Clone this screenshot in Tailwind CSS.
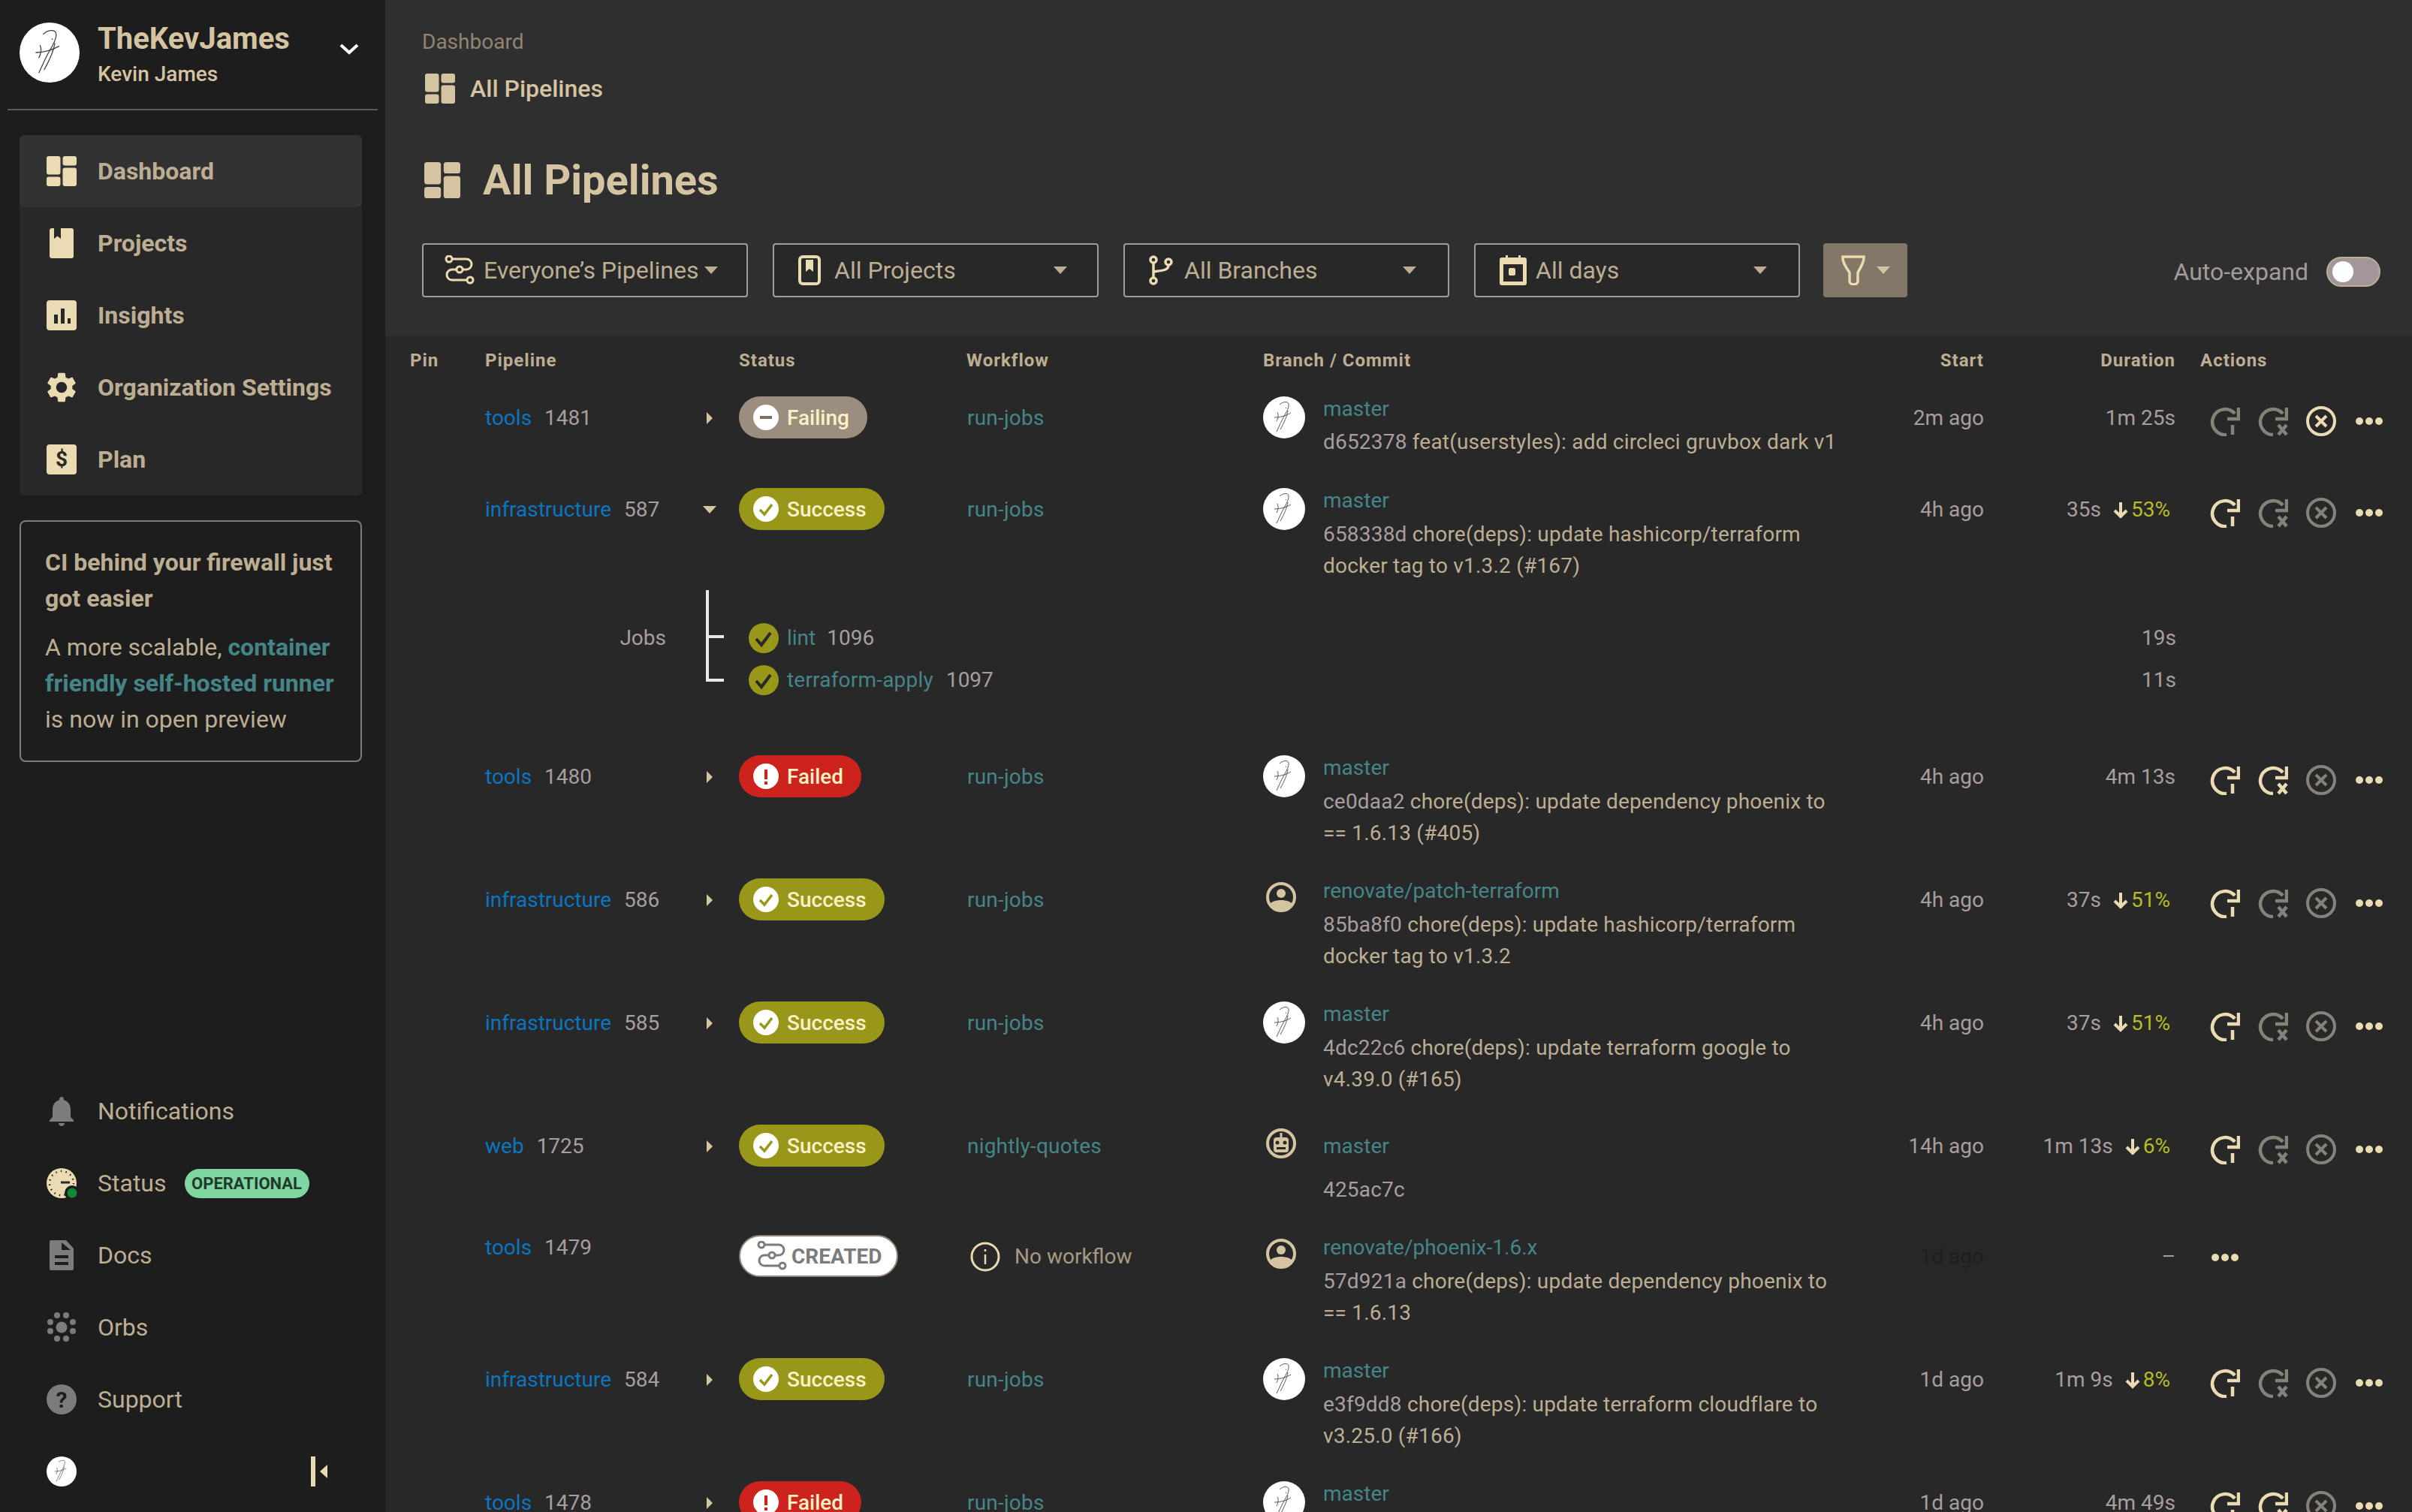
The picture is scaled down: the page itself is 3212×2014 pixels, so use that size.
<!DOCTYPE html>
<html lang="en">

<head>
    <meta charset="UTF-8">
    <title>All Pipelines</title>
    <script src="https://cdn.jsdelivr.net/npm/@tailwindcss/browser@4"></script>
</head>

<body class="h-screen overflow-hidden bg-[#2f2f2f] font-['Roboto',sans-serif] text-[28px] text-[#bdae93]">
    <!-- shared icons -->
    <svg class="hidden">
        <symbol id="i-dash" viewBox="0 0 40 40"><g fill="currentColor"><rect x="0" y="0" width="18.5" height="24.5" rx="3"/><rect x="21.5" y="0" width="18.5" height="12.5" rx="3"/><rect x="0" y="27.5" width="18.5" height="12.5" rx="3"/><rect x="21.5" y="15.5" width="18.5" height="24.5" rx="3"/></g></symbol>
        <symbol id="i-logo" viewBox="0 0 56 56"><circle cx="28" cy="28" r="28" fill="#fff"/><g fill="none" stroke="#444" stroke-width="0.9"><path d="M22 11c4-4 11-5 12-1 1 6-5 14-9 22-3 6-5 11-7 15"/><path d="M33 19c-1 7-5 16-10 25"/><path d="M19 21c2 4 1 8-1 12"/><path d="M15 28c7 0 15-2 22-6"/><path d="M30 15l1 1"/></g></symbol>
        <symbol id="i-pipe" viewBox="0 0 40 40"><g fill="none" stroke="currentColor" stroke-width="3"><circle cx="6" cy="5" r="4"/><path d="M10 5h19a7 7 0 0 1 0 14h-5"/><circle cx="20" cy="19" r="4"/><path d="M16 19h-6a7 7 0 0 0 0 14h20"/><circle cx="34" cy="33" r="4"/></g></symbol>
        <symbol id="i-rerun" viewBox="0 0 40 40"><g fill="none" stroke="currentColor" stroke-width="4.5"><path d="M33 10A17 17 0 1 0 22 38"/><path d="M38 2v15H23"/><path d="M30 25v13"/></g></symbol>
        <symbol id="i-refail" viewBox="0 0 40 40"><g fill="none" stroke="currentColor" stroke-width="4.5"><path d="M33 10A17 17 0 1 0 20 38"/><path d="M38 2v15H23"/><path d="M27 25l11 13M38 25L27 38"/></g></symbol>
        <symbol id="i-cancel" viewBox="0 0 40 40"><g fill="none" stroke="currentColor" stroke-width="4"><circle cx="20" cy="20" r="18"/><path d="M13 13l14 14M27 13L13 27"/></g></symbol>
        <symbol id="i-dots" viewBox="0 0 40 40"><g fill="currentColor"><circle cx="7" cy="20" r="5"/><circle cx="20" cy="20" r="5"/><circle cx="33" cy="20" r="5"/></g></symbol>
        <symbol id="i-user" viewBox="0 0 40 40"><circle cx="20" cy="20" r="18" fill="none" stroke="currentColor" stroke-width="4"/><circle cx="20" cy="15" r="6" fill="currentColor"/><path d="M4 30c3-4 9-6 16-6s13 2 16 6c-3 6-9 9-16 9s-13-3-16-9z" fill="currentColor"/></symbol>
        <symbol id="i-robot" viewBox="0 0 40 40"><circle cx="20" cy="20" r="18" fill="none" stroke="currentColor" stroke-width="4"/><rect x="10" y="12" width="20" height="20" rx="4" fill="currentColor"/><rect x="18.5" y="6" width="3" height="7" fill="currentColor"/><circle cx="15" cy="19" r="2.5" fill="#282828"/><circle cx="25" cy="19" r="2.5" fill="#282828"/><rect x="14" y="25" width="12" height="3" fill="#282828"/></symbol>
    </svg>

    <div class="flex h-full">
        <!-- sidebar -->
        <aside class="flex h-full w-[513px] shrink-0 flex-col bg-[#1d1d1d]">
            <div class="mx-[10px] flex h-[147px] items-start border-b-2 border-[#5a5a5a] pl-4 pt-[30px]">
                <svg class="h-[80px] w-[80px] shrink-0"><use href="#i-logo"/></svg>
                <div class="ml-6 w-[270px]">
                    <div class="text-[40px] leading-[44px] font-bold text-[#d5c4a1]">TheKevJames</div>
                    <div class="mt-[7px] text-[28px] leading-[36px] font-medium text-[#d5c4a1]">Kevin James</div>
                </div>
                <svg class="mt-[27px] ml-[52px] h-[16px] w-[26px] text-white" viewBox="0 0 26 16"><path d="M2 3l11 10L24 3" fill="none" stroke="currentColor" stroke-width="4"/></svg>
            </div>

            <nav class="mx-[26px] mt-[33px] w-[456px] rounded-md bg-[#282828] text-[32px] font-bold text-[#bdae93]">
                <a class="flex h-[96px] items-center rounded-md bg-[#323232] pl-9">
                    <svg class="h-10 w-10 text-[#ebdbb2]"><use href="#i-dash"/></svg>
                    <span class="ml-7">Dashboard</span>
                </a>
                <a class="flex h-[96px] items-center pl-9">
                    <svg class="h-10 w-10" viewBox="0 0 40 40"><rect x="4" width="32" height="40" rx="3" fill="#ebdbb2"/><path d="M10 0h9v14l-4.5-3.5L10 14z" fill="#282828"/></svg>
                    <span class="ml-7">Projects</span>
                </a>
                <a class="flex h-[96px] items-center pl-9">
                    <svg class="h-10 w-10" viewBox="0 0 40 40"><rect width="40" height="40" rx="4" fill="#ebdbb2"/><g fill="#282828"><rect x="10" y="19" width="5" height="12"/><rect x="19" y="11" width="5" height="20"/><rect x="28" y="24" width="4" height="7"/></g></svg>
                    <span class="ml-7">Insights</span>
                </a>
                <a class="flex h-[96px] items-center pl-9">
                    <svg class="h-10 w-10" viewBox="2 2 20 20"><path fill="#ebdbb2" d="M19.14 12.94c.04-.3.06-.61.06-.94 0-.32-.02-.64-.07-.94l2.03-1.58c.18-.14.23-.41.12-.61l-1.92-3.32c-.12-.22-.37-.29-.59-.22l-2.39.96c-.5-.38-1.03-.7-1.62-.94l-.36-2.54c-.04-.24-.24-.41-.48-.41h-3.84c-.24 0-.43.17-.47.41l-.36 2.54c-.59.24-1.13.57-1.62.94l-2.39-.96c-.22-.08-.47 0-.59.22L2.74 8.87c-.12.21-.08.47.12.61l2.03 1.58c-.05.3-.09.63-.09.94s.02.64.07.94l-2.03 1.58c-.18.14-.23.41-.12.61l1.92 3.32c.12.22.37.29.59.22l2.39-.96c.5.38 1.03.7 1.62.94l.36 2.54c.05.24.24.41.48.41h3.84c.24 0 .44-.17.47-.41l.36-2.54c.59-.24 1.13-.56 1.62-.94l2.39.96c.22.08.47 0 .59-.22l1.92-3.32c.12-.22.07-.47-.12-.61l-2.01-1.58zM12 15.6c-1.98 0-3.6-1.62-3.6-3.6s1.62-3.6 3.6-3.6 3.6 1.62 3.6 3.6-1.62 3.6-3.6 3.6z"/></svg>
                    <span class="ml-7">Organization Settings</span>
                </a>
                <a class="flex h-[96px] items-center pl-9">
                    <div class="flex h-10 w-10 items-center justify-center rounded bg-[#ebdbb2] text-[28px] font-bold text-[#282828]">$</div>
                    <span class="ml-7">Plan</span>
                </a>
            </nav>

            <div class="mx-[26px] mt-[33px] h-[322px] w-[456px] rounded-lg border-2 border-[#7c7c7c] pt-[30px] pl-[32px] text-[32px] leading-[48px] text-[#bdae93]">
                <div class="font-bold">CI behind your firewall just got easier</div>
                <div class="mt-[17px] w-[400px]">A more scalable, <span class="font-bold text-[#458588]">container friendly self-hosted runner</span> is now in open preview</div>
            </div>

            <div class="mt-auto pb-[6px] text-[32px] text-[#bdae93]">
                <a class="flex h-[96px] items-center pl-[62px]">
                    <svg class="h-10 w-10" viewBox="3.5 2 17 20" preserveAspectRatio="xMidYMid meet"><path fill="#7c7c7c" d="M12 22c1.1 0 2-.9 2-2h-4c0 1.1.89 2 2 2zm6-6v-5c0-3.07-1.64-5.64-4.5-6.32V4c0-.83-.67-1.5-1.5-1.5s-1.5.67-1.5 1.5v.68C7.63 5.36 6 7.92 6 11v5l-2 2v1h16v-1l-2-2z"/></svg>
                    <span class="ml-7">Notifications</span>
                </a>
                <a class="flex h-[96px] items-center pl-[62px]">
                    <svg class="h-10 w-10 overflow-visible" viewBox="0 0 40 40">
                        <circle cx="20" cy="20" r="20" fill="#ebdbb2"/>
                        <circle cx="20" cy="20" r="16" fill="none" stroke="#282828" stroke-width="2.5" stroke-dasharray="1.5 5.2"/>
                        <path d="M19 19h12" stroke="#282828" stroke-width="3"/>
                        <circle cx="34" cy="33" r="10" fill="#1d1d1d"/><circle cx="34" cy="33" r="6.5" fill="#0f8a33"/>
                    </svg>
                    <span class="ml-7">Status</span>
                    <span class="ml-6 flex h-[39px] w-[166px] items-center justify-center rounded-full bg-[#7fd6a0] text-[22px] font-bold text-[#1f3b2a]">OPERATIONAL</span>
                </a>
                <a class="flex h-[96px] items-center pl-[62px]">
                    <svg class="h-10 w-10" viewBox="0 0 40 40"><path fill="#7c7c7c" d="M6 0h20l10 11v27a2 2 0 0 1-2 2H6a2 2 0 0 1-2-2V2a2 2 0 0 1 2-2z"/><path d="M20 3l12 10H20z" fill="#1d1d1d"/><rect x="11" y="20" width="18" height="4" fill="#1d1d1d"/><rect x="11" y="29" width="18" height="4" fill="#1d1d1d"/></svg>
                    <span class="ml-7">Docs</span>
                </a>
                <a class="flex h-[96px] items-center pl-[62px]">
                    <svg class="h-10 w-10" viewBox="0 0 40 40"><g fill="#7c7c7c"><circle cx="20" cy="20" r="7.5"/><circle cx="14" cy="4" r="4"/><circle cx="26" cy="4" r="4"/><circle cx="5" cy="13" r="4"/><circle cx="35" cy="13" r="4"/><circle cx="5" cy="25" r="4"/><circle cx="35" cy="25" r="4"/><circle cx="14" cy="35" r="4"/><circle cx="26" cy="35" r="4"/></g></svg>
                    <span class="ml-7">Orbs</span>
                </a>
                <a class="flex h-[96px] items-center pl-[62px]">
                    <div class="flex h-10 w-10 items-center justify-center rounded-full bg-[#7c7c7c] text-[30px] font-bold text-[#1d1d1d]">?</div>
                    <span class="ml-7">Support</span>
                </a>
                <div class="flex h-[96px] items-center pl-[62px]">
                    <svg class="h-10 w-10"><use href="#i-logo"/></svg>
                    <svg class="ml-[312px] h-10 w-[24px] text-[#ebdbb2]" viewBox="0 0 24 40"><rect width="6" height="40" fill="currentColor"/><path d="M22 11v18L12 20z" fill="currentColor"/></svg>
                </div>
            </div>
        </aside>

        <!-- main -->
        <main class="min-w-0 flex-1">
            <header class="h-[447px] pt-[38px] pl-[49px]">
                <div class="text-[28px] leading-9 text-[#928374]">Dashboard</div>
                <div class="mt-[24px] flex h-10 items-center pl-[4px] text-[32px] font-medium text-[#d5c4a1]">
                    <svg class="h-10 w-10 text-[#d5c4a1]"><use href="#i-dash"/></svg>
                    <span class="ml-[20px]">All Pipelines</span>
                </div>
                <div class="mt-[78px] flex h-12 items-center pl-[3px]">
                    <svg class="h-12 w-12 text-[#d5c4a1]"><use href="#i-dash"/></svg>
                    <h1 class="ml-[30px] text-[56px] font-bold text-[#d5c4a1]">All Pipelines</h1>
                </div>
                <div class="mt-[60px] flex items-center">
                    <button class="flex h-[72px] w-[434px] items-center rounded-sm border-2 border-[#a39c94] bg-[#282828] pl-[28px] text-[32px] text-[#bdae93]">
                        <svg class="h-10 w-10 text-[#ebdbb2]"><use href="#i-pipe"/></svg>
                        <span class="ml-[12px]">Everyone’s Pipelines</span>
                        <span class="ml-2 h-0 w-0 border-x-[9px] border-t-[10px] border-x-transparent border-t-[#bdae93]"></span>
                    </button>
                    <button class="ml-[33px] flex h-[72px] w-[434px] items-center rounded-sm border-2 border-[#a39c94] bg-[#282828] pl-[32px] text-[32px] text-[#bdae93]">
                        <svg class="h-10 w-[30px] text-[#ebdbb2]" viewBox="0 0 30 40"><rect x="2" y="2" width="26" height="36" rx="4" fill="none" stroke="currentColor" stroke-width="4"/><path d="M10 6h10v16l-5-4-5 4z" fill="currentColor"/></svg>
                        <span class="ml-[18px]">All Projects</span>
                        <span class="mr-[40px] ml-auto h-0 w-0 border-x-[9px] border-t-[10px] border-x-transparent border-t-[#bdae93]"></span>
                    </button>
                    <button class="ml-[33px] flex h-[72px] w-[434px] items-center rounded-sm border-2 border-[#a39c94] bg-[#282828] pl-[32px] text-[32px] text-[#bdae93]">
                        <svg class="h-10 w-[32px] text-[#ebdbb2]" viewBox="0 0 32 40"><g fill="none" stroke="currentColor" stroke-width="3.5"><circle cx="6" cy="6" r="4"/><circle cx="26" cy="9" r="4"/><circle cx="6" cy="34" r="4"/><path d="M6 10v20M26 13c0 6-4 7-20 9"/></g></svg>
                        <span class="ml-[15px]">All Branches</span>
                        <span class="mr-[42px] ml-auto h-0 w-0 border-x-[9px] border-t-[10px] border-x-transparent border-t-[#bdae93]"></span>
                    </button>
                    <button class="ml-[33px] flex h-[72px] w-[434px] items-center rounded-sm border-2 border-[#a39c94] bg-[#282828] pl-[32px] text-[32px] text-[#bdae93]">
                        <svg class="h-10 w-9 text-[#ebdbb2]" viewBox="0 0 36 40"><path d="M3 3h5V0h3v3h14V0h3v3h5a3 3 0 0 1 3 3v31a3 3 0 0 1-3 3H3a3 3 0 0 1-3-3V6a3 3 0 0 1 3-3z" fill="currentColor"/><rect x="5" y="12" width="26" height="23" fill="#282828"/><rect x="12" y="17" width="9" height="10" rx="2" fill="currentColor"/></svg>
                        <span class="ml-3">All days</span>
                        <span class="mr-[42px] ml-auto h-0 w-0 border-x-[9px] border-t-[10px] border-x-transparent border-t-[#bdae93]"></span>
                    </button>
                    <button class="ml-[31px] flex h-[72px] w-[112px] items-center rounded bg-[#837767] pl-[22px]">
                        <svg class="h-10 w-9 text-[#ebdbb2]" viewBox="0 0 36 40"><path d="M4 2h28c1 6-5 16-8 21v12c0 5-11 5-11 0V23C8 16 3 8 4 2z" fill="none" stroke="currentColor" stroke-width="3.5"/></svg>
                        <span class="ml-[13px] h-0 w-0 border-x-[9px] border-t-[10px] border-x-transparent border-t-[#d5c4a1]"></span>
                    </button>
                    <div class="ml-auto flex items-center pr-[42px] pt-[4px]">
                        <span class="text-[32px] text-[#a39a9a]">Auto-expand</span>
                        <span class="ml-[24px] flex h-10 w-[72px] items-center rounded-full border-2 border-[#bdae93] bg-[#a3969b] pl-[6px]">
                            <span class="h-7 w-7 rounded-full bg-white"></span>
                        </span>
                    </div>
                </div>
            </header>

            <section class="h-[1567px] overflow-hidden bg-[#282828] pl-[33px]">
                <div class="grid h-[81px] grid-cols-[100px_338px_303px_395px_960px_255px_1fr] items-center pb-[16px] text-[24px] font-bold tracking-[1px] text-[#bdae93]">
                    <div>Pin</div>
                    <div>Pipeline</div>
                    <div>Status</div>
                    <div>Workflow</div>
                    <div class="flex justify-between"><span>Branch / Commit</span><span>Start</span></div>
                    <div class="text-right">Duration</div>
                    <div class="pl-[33px]">Actions</div>
                </div>
                <div id="rows"></div>
            </section>
        </main>
    </div>

    <script>
        const STATUS = {
            failing: { label: 'Failing', cls: 'bg-[#9c8e7f]', icon: '<path d="M9 17h16" stroke="#7c6f64" stroke-width="4"/>' },
            success: { label: 'Success', cls: 'bg-[#98971a]', icon: '<path d="M9 18l6 6 10-13" fill="none" stroke="#98971a" stroke-width="3.5"/>' },
            failed: { label: 'Failed', cls: 'bg-[#cc241d]', icon: '<path d="M17 8v13M17 24v4" stroke="#cc241d" stroke-width="4"/>' },
        };

        const pipelines = [
            { h: 'h-[122px]', tight: true, project: 'tools', num: 1481, status: 'failing', flow: 'run-jobs', who: 'logo', branch: 'master', sha: 'd652378', msg: 'feat(userstyles): add circleci gruvbox dark v1', start: '2m ago', time: '1m 25s', rerun: 0, refail: 0, cancel: 1 },
            { h: 'h-[136px]', project: 'infrastructure', num: 587, open: true, status: 'success', flow: 'run-jobs', who: 'logo', branch: 'master', sha: '658338d', msg: 'chore(deps): update hashicorp/terraform docker tag to v1.3.2 (#167)', start: '4h ago', time: '35s', pct: '53%', rerun: 1, refail: 0, cancel: 0 },
            { h: 'h-[164px]', project: 'tools', num: 1480, status: 'failed', flow: 'run-jobs', who: 'logo', branch: 'master', sha: 'ce0daa2', msg: 'chore(deps): update dependency phoenix to == 1.6.13 (#405)', start: '4h ago', time: '4m 13s', rerun: 1, refail: 1, cancel: 0 },
            { h: 'h-[164px]', project: 'infrastructure', num: 586, status: 'success', flow: 'run-jobs', who: 'user', branch: 'renovate/patch-terraform', sha: '85ba8f0', msg: 'chore(deps): update hashicorp/terraform docker tag to v1.3.2', start: '4h ago', time: '37s', pct: '51%', rerun: 1, refail: 0, cancel: 0 },
            { h: 'h-[164px]', project: 'infrastructure', num: 585, status: 'success', flow: 'run-jobs', who: 'logo', branch: 'master', sha: '4dc22c6', msg: 'chore(deps): update terraform google to v4.39.0 (#165)', start: '4h ago', time: '37s', pct: '51%', rerun: 1, refail: 0, cancel: 0 },
            { h: 'h-[147px]', project: 'web', num: 1725, status: 'success', flow: 'nightly-quotes', who: 'robot', branch: 'master', sha: '425ac7c', msg: '', centerBranch: true, start: '14h ago', time: '1m 13s', pct: '6%', rerun: 1, refail: 0, cancel: 0 },
            { h: 'h-[164px]', project: 'tools', num: 1479, status: 'created', who: 'user', branch: 'renovate/phoenix-1.6.x', sha: '57d921a', msg: 'chore(deps): update dependency phoenix to == 1.6.13', start: '1d ago', time: '–' },
            { h: 'h-[164px]', project: 'infrastructure', num: 584, status: 'success', flow: 'run-jobs', who: 'logo', branch: 'master', sha: 'e3f9dd8', msg: 'chore(deps): update terraform cloudflare to v3.25.0 (#166)', start: '1d ago', time: '1m 9s', pct: '8%', rerun: 1, refail: 0, cancel: 0 },
            { h: 'h-[164px]', project: 'tools', num: 1478, status: 'failed', flow: 'run-jobs', who: 'logo', branch: 'master', start: '1d ago', time: '4m 49s', rerun: 1, refail: 1, cancel: 0 },
        ];

        const tone = (on) => (on ? 'text-[#ebdbb2]' : 'text-[#85827a]');

        function statusPill(p) {
            if (p.status === 'created') {
                return `<div class="flex h-[56px] w-[212px] items-center rounded-full border-2 border-[#928374] bg-white pl-[22px] text-[28px] font-bold text-[#7c7c7c]">
                    <svg class="h-10 w-10 text-[#7c7c7c]"><use href="#i-pipe"/></svg><span class="ml-[6px] pt-[2px]">CREATED</span></div>`;
            }
            const s = STATUS[p.status];
            return `<div class="inline-flex h-[56px] items-center rounded-full pr-[24px] pl-[19px] font-medium text-[#fbf1c7] ${s.cls}">
                <svg class="h-[34px] w-[34px]" viewBox="0 0 34 34"><circle cx="17" cy="17" r="17" fill="#fff"/>${s.icon}</svg><span class="ml-[11px] pt-[2px]">${s.label}</span></div>`;
        }

        function workflow(p) {
            if (!p.flow) {
                return `<div class="flex h-[58px] items-center"><svg class="ml-[5px] h-10 w-10 text-[#ebdbb2]" viewBox="0 0 40 40"><circle cx="20" cy="20" r="18" fill="none" stroke="currentColor" stroke-width="3"/><path d="M20 17v13M20 10v3" stroke="currentColor" stroke-width="2.5"/></svg><span class="ml-[19px] text-[#a89984]">No workflow</span></div>`;
            }
            return `<div class="flex h-[58px] items-center pl-[1px] tracking-[0.2px] text-[#458588]">${p.flow}</div>`;
        }

        function avatar(who) {
            if (who === 'logo') return '<svg class="h-[56px] w-[56px]"><use href="#i-logo"/></svg>';
            if (who === 'user') return '<svg class="mt-[5px] ml-[4px] h-10 w-10 text-[#d5c4a1]"><use href="#i-user"/></svg>';
            return '<svg class="mt-[5px] ml-[4px] h-10 w-10 text-[#d5c4a1]"><use href="#i-robot"/></svg>';
        }

        function commit(p) {
            if (!p.sha) return '';
            const gap = p.centerBranch ? 'pt-[12px] mt-[8px]' : p.tight ? 'mt-[6px]' : 'mt-[7px]';
            return `<div class="${gap} w-[692px] leading-[42px] tracking-[0.2px]"><span class="text-[#a89e9e]">${p.sha}</span> ${p.msg}</div>`;
        }

        function actions(p) {
            if (p.status === 'created') {
                return `<div class="flex h-[60px] items-center pl-[46px]"><svg class="h-10 w-10 text-[#ebdbb2]"><use href="#i-dots"/></svg></div>`;
            }
            return `<div class="flex h-[66px] items-center gap-[24px] pl-[46px]">
                <svg class="h-10 w-10 ${tone(p.rerun)}"><use href="#i-rerun"/></svg>
                <svg class="h-10 w-10 ${tone(p.refail)}"><use href="#i-refail"/></svg>
                <svg class="h-10 w-10 ${tone(p.cancel)}"><use href="#i-cancel"/></svg>
                <svg class="h-10 w-10 text-[#ebdbb2]"><use href="#i-dots"/></svg>
            </div>`;
        }

        function duration(p) {
            if (!p.pct) return `<div class="flex h-[58px] items-center justify-end text-[#a89e9e]">${p.time}</div>`;
            return `<div class="flex h-[58px] items-center justify-end pr-[7px] text-[#a89e9e]">${p.time}
                <svg class="ml-[15px] h-[24px] w-[22px] text-[#ebdbb2]" viewBox="0 0 22 24"><path d="M11 2v19M3 13l8 8 8-8" fill="none" stroke="currentColor" stroke-width="4"/></svg>
                <span class="ml-[3px] text-[#b8bb26]">${p.pct}</span></div>`;
        }

        function jobs() {
            return `<div class="flex h-[220px] items-start">
                <div class="mt-[46px] w-[341px] text-right leading-9 text-[#a89e9e]">Jobs</div>
                <svg class="ml-[53px] h-[122px] w-[24px] text-[#e8e8e8]" viewBox="0 0 24 122"><path d="M2 0v120h22M2 62h22" fill="none" stroke="currentColor" stroke-width="4"/></svg>
                <div class="mt-[36px] ml-[33px] w-[1901px]">
                    <div class="flex h-[56px] items-center">
                        <svg class="h-10 w-10" viewBox="0 0 40 40"><circle cx="20" cy="20" r="20" fill="#98971a"/><path d="M10 21l7 8 12-16" fill="none" stroke="#282828" stroke-width="4"/></svg>
                        <span class="ml-[11px] text-[#458588]">lint</span><span class="ml-[15px] text-[#a89e9e]">1096</span>
                        <span class="ml-auto text-[#a89e9e]">19s</span>
                    </div>
                    <div class="flex h-[56px] items-center">
                        <svg class="h-10 w-10" viewBox="0 0 40 40"><circle cx="20" cy="20" r="20" fill="#98971a"/><path d="M10 21l7 8 12-16" fill="none" stroke="#282828" stroke-width="4"/></svg>
                        <span class="ml-[11px] tracking-[0.2px] text-[#458588]">terraform-apply</span><span class="ml-[17px] text-[#a89e9e]">1097</span>
                        <span class="ml-auto text-[#a89e9e]">11s</span>
                    </div>
                </div>
            </div>`;
        }

        // Render the pipeline rows
        document.getElementById('rows').innerHTML = pipelines.map((p) => {
            const nameCls = p.status === 'created' ? 'h-[34px] leading-[34px]' : 'h-[58px] items-center';
            const chevron = p.status === 'created' ? '' : p.open
                ? '<span class="ml-auto mr-[30px] h-0 w-0 border-x-[9px] border-t-[10px] border-x-transparent border-t-[#d5c4a1]"></span>'
                : '<span class="ml-auto mr-[35px] h-0 w-0 border-y-[8px] border-l-[8px] border-y-transparent border-l-[#d5c4a1]"></span>';
            return `<div class="grid ${p.h} grid-cols-[100px_338px_303px_395px_802px_158px_255px_1fr] items-start">
                <div></div>
                <div class="flex ${nameCls}"><span class="text-[#0b75c0]">${p.project}</span><span class="ml-[17px] text-[#a89e9e]">${p.num}</span>${chevron}</div>
                <div>${statusPill(p)}</div>
                ${workflow(p)}
                <div class="flex">
                    <div class="w-[80px] shrink-0">${avatar(p.who)}</div>
                    <div>
                        <div class="${p.centerBranch ? 'mt-[12px]' : ''} leading-[34px] text-[#458588]">${p.branch}</div>
                        ${commit(p)}
                    </div>
                </div>
                <div class="flex h-[58px] items-center justify-end ${p.status === 'created' ? 'text-[#1f1f1f]' : 'text-[#a89e9e]'}">${p.start}</div>
                ${duration(p)}
                ${actions(p)}
            </div>${p.open ? jobs() : ''}`;
        }).join('');
    </script>
</body>

</html>
